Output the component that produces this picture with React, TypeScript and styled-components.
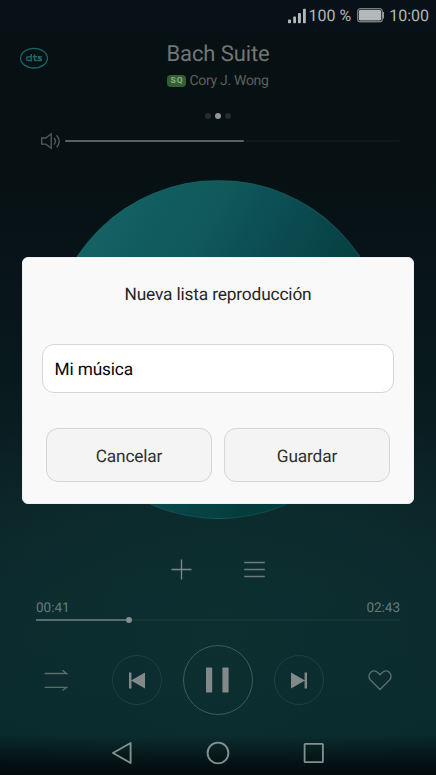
import React from "react";
import styled, { createGlobalStyle } from "styled-components";

const GlobalStyle = createGlobalStyle`
  * { box-sizing: border-box; }
  html, body { margin: 0; padding: 0; background: #071014; }
  body { font-family: Roboto, "Noto Sans", sans-serif; overflow: hidden; text-rendering: geometricPrecision; }
  svg { display: block; flex: none; }
  button, input { font-family: inherit; text-rendering: inherit; }
`;

const Screen = styled.div`
  position: relative;
  width: 436px;
  height: 775px;
  display: flex;
  flex-direction: column;
  overflow: hidden;
  background:
    linear-gradient(to bottom, transparent 735px, #020c0e 772px),
    radial-gradient(ellipse 310px 270px at 50% 635px, #0d2f30 0%, rgba(13, 47, 48, 0.55) 55%, transparent 100%),
    linear-gradient(to bottom, #071117 0, #071117 32px, #071012 34px, #071012 140px, #071214 200px, #08131a 260px, #08191d 370px, #0b2327 500px, #0c292d 600px, #0a292d 690px, #08282c 735px, #061b1e 775px);
`;

const StatusBar = styled.header`
  height: 30px;
  padding: 1px 7px 0 0;
  display: flex;
  align-items: center;
  justify-content: flex-end;
  font-size: 16px;
  color: #b3b8ba;
`;

const StatusText = styled.span<{ $gap: number }>`
  margin-left: ${(p) => p.$gap}px;
  line-height: 30px;
  white-space: pre;
`;

const TrackHeader = styled.section`
  height: 80px;
  padding: 0 20px;
  display: grid;
  grid-template-columns: 28px 1fr 28px;
`;

const DtsBadge = styled.div`
  padding-top: 17px;
`;

const TrackInfo = styled.div`
  display: flex;
  flex-direction: column;
  align-items: center;
`;

const TrackTitle = styled.h1`
  margin: 10px 0 0;
  font-size: 22px;
  line-height: 30px;
  letter-spacing: -0.1px;
  font-weight: 400;
  color: #727677;
`;

const Artist = styled.div`
  display: flex;
  align-items: center;
  gap: 3px;
  height: 21px;
  font-size: 14px;
  letter-spacing: -0.3px;
  color: #5b6162;
`;

const Quality = styled.span`
  width: 19px;
  height: 12px;
  border-radius: 4px;
  background: #32602f;
  color: #93a792;
  font-size: 8.5px;
  font-weight: 700;
  letter-spacing: 1.2px;
  line-height: 12.5px;
  padding-left: 3px;
`;

const Pager = styled.div`
  height: 12px;
  display: flex;
  align-items: center;
  justify-content: center;
  gap: 4px;
`;

const Dot = styled.i<{ $active?: boolean }>`
  width: 6px;
  height: 6px;
  border-radius: 50%;
  background: ${(p) => (p.$active ? "#919596" : "#252c2d")};
`;

const VolumeRow = styled.div`
  height: 38px;
  padding: 0 36px 0 40px;
  display: flex;
  align-items: center;
  gap: 3px;
`;

const Track = styled.div`
  flex: 1;
  height: 2px;
  border-radius: 1px;
  background: #0d1819;
`;

const VolumeLevel = styled.div`
  width: 179px;
  height: 2px;
  border-radius: 1px;
  background: #5b6061;
`;

const Disc = styled.div`
  flex: none;
  width: 339px;
  height: 339px;
  margin: 20px auto 0;
  border-radius: 50%;
  border: 1px solid rgba(40, 105, 105, 0.35);
  background: linear-gradient(119deg, #17666a 5%, #125d60 22%, #10585a 35%, #0c4f55 45%, #09474b 56%, #043c3d 72%, #023e40 90%);
`;

const Actions = styled.div`
  height: 26px;
  margin-top: 37px;
  display: flex;
  align-items: center;
  justify-content: center;
  gap: 52px;
`;

const Progress = styled.section`
  height: 48px;
  margin-top: 13px;
  padding: 5px 36px 0;
`;

const Times = styled.div`
  display: flex;
  justify-content: space-between;
  height: 16px;
  font-size: 13.5px;
  line-height: 17px;
  color: #667a7b;
`;

const SeekBar = styled.div`
  height: 7px;
  display: flex;
  align-items: center;
`;

const Elapsed = styled.div`
  width: 90px;
  height: 2px;
  background: #596d6e;
`;

const Thumb = styled.i`
  width: 6px;
  height: 6px;
  border-radius: 50%;
  background: #858f8f;
`;

const Remaining = styled.div`
  flex: 1;
  height: 2px;
  background: #143436;
`;

const Controls = styled.section`
  height: 70px;
  display: flex;
  align-items: center;
  justify-content: center;
  margin-top: 2px;
`;

const RoundButton = styled.button<{ $size: number; $line: string; $shift?: number }>`
  width: ${(p) => p.$size}px;
  height: ${(p) => p.$size}px;
  flex: none;
  padding: 0 ${(p) => p.$shift ?? 0}px 0 0;
  border: 1px solid ${(p) => p.$line};
  border-radius: 50%;
  background: none;
  display: flex;
  align-items: center;
  justify-content: center;
`;

const Spacer = styled.span<{ $w: number }>`
  width: ${(p) => p.$w}px;
  flex: none;
`;

const NavBar = styled.nav`
  height: 44px;
  margin-top: 16px;
  display: flex;
  align-items: center;
  justify-content: center;
  gap: 73px;
`;

const Dialog = styled.div`
  position: absolute;
  left: 22px;
  top: 257px;
  width: 392px;
  height: 247px;
  padding: 24px 20px 0;
  border-radius: 6px;
  background: #f9f9f9;
  border: 1px solid #eef0f0;
`;

const DialogTitle = styled.h2`
  margin: 0;
  height: 25px;
  line-height: 26px;
  text-align: center;
  font-size: 17.3px;
  letter-spacing: -0.15px;
  font-weight: 400;
  color: #262626;
`;

const NameInput = styled.input`
  display: block;
  width: 352px;
  height: 49px;
  margin: 37px 0 0 -1px;
  padding: 2px 11.5px 0;
  border: 1px solid #d6d6d6;
  border-radius: 12px;
  background: #fff;
  font-size: 17.3px;
  letter-spacing: -0.15px;
  color: #080808;
  outline: none;
`;

const DialogButtons = styled.div`
  display: flex;
  gap: 12px;
  margin: 35px 0 0 3px;
`;

const DialogButton = styled.button`
  width: 166px;
  height: 54px;
  padding: 3px 0 0;
  border: 1px solid #d5d5d5;
  border-radius: 12px;
  background: #f4f4f4;
  font-size: 17.3px;
  letter-spacing: -0.15px;
  color: #303030;
`;

const SignalIcon = () => (
  <svg width="18" height="16" viewBox="0 0 18 16" fill="#b3b8ba">
    <rect x="0" y="11.5" width="3" height="3.7" rx=".8" />
    <rect x="5.2" y="8.5" width="2.8" height="6.7" rx=".8" />
    <rect x="10" y="5" width="2.9" height="10.2" rx=".8" />
    <rect x="15" y="0.7" width="2.8" height="14.5" rx=".8" />
  </svg>
);

const BatteryIcon = () => (
  <svg width="28" height="15" viewBox="0 0 28 15">
    <rect x="0.8" y="0.8" width="24.4" height="13" rx="1.8" fill="none" stroke="#a7adae" strokeWidth="1" />
    <rect x="2" y="2" width="22" height="10.6" rx="1" fill="#b3b8b8" />
    <path d="M25.6 4h1.3v6.4h-1.3z" fill="#a7adae" />
  </svg>
);

const DtsIcon = () => (
  <svg width="28" height="22" viewBox="0 0 28 22">
    <ellipse cx="14" cy="11.2" rx="13.4" ry="9.8" fill="none" stroke="#166568" strokeWidth="1.3" />
    <g fill="none" stroke="#1b6668" strokeWidth="1.5">
      <path d="M11.2 6.9v7.5M11.2 9.7H8.3q-1.6 0-1.6 1.3v1.3q0 1.3 1.6 1.3h2.9" />
      <path d="M14.6 7.4v6.2h2.2M12.7 9.7h4.5M21.8 9.7h-3.1v1.5l2.5.9v1.5h-4" />
    </g>
  </svg>
);

const SpeakerIcon = () => (
  <svg width="22" height="18" viewBox="0 0 22 18" fill="none" stroke="#565c5e" strokeWidth="1.3">
    <path d="M1.7 6h4.1l5.4-4.2v14.4l-5.4-4H1.7z" />
    <path d="M14 6q2.8 3.2 0 6.6M16.6 3.2q5.2 6 0 12.2" />
  </svg>
);

const PlusIcon = () => (
  <svg width="21" height="21" viewBox="0 0 21 21" stroke="#7d898a" strokeWidth="1.3">
    <path d="M.5 10.5h20M10.5.5v20" />
  </svg>
);

const ListIcon = () => (
  <svg width="21" height="21" viewBox="0 0 21 21" stroke="#6c7c7d" strokeWidth="1.4">
    <path d="M.2 3.5h20.6M.2 10.5h20.6M.2 17.5h20.6" />
  </svg>
);

const RepeatIcon = () => (
  <svg width="24" height="24" viewBox="0 0 24 24" fill="none" stroke="#596d6f" strokeWidth="1.3">
    <path d="M.6 5.5h22l-4.2-3.2M.6 19.4h22l-4.2 3.2" />
  </svg>
);

const SkipIcon = ({ back }: { back?: boolean }) => (
  <svg width="16" height="17" viewBox="0 0 16 17" fill="#838989">
    {back ? (
      <path d="M0 .4h2.4v16H0zM2 8.4 16 .6v15.8z" />
    ) : (
      <path d="M16 .4h-2.4v16H16zM14 8.4 0 .6v15.8z" />
    )}
  </svg>
);

const PauseIcon = () => (
  <svg width="23" height="26" viewBox="0 0 23 26" fill="#838989">
    <rect x="0" y=".6" width="6.2" height="24.8" rx=".6" />
    <rect x="16.4" y=".6" width="6.2" height="24.8" rx=".6" />
  </svg>
);

const HeartIcon = () => (
  <svg width="24" height="21" viewBox="0 0 24 21" fill="none" stroke="#5a6e6f" strokeWidth="1.4" strokeLinejoin="round">
    <path d="M12 19.5 2.5 10C.4 7.6.5 4.2 2.8 2.2 5 .5 8 .8 10 2.7L12 4.7l2-2c2-1.9 5-2.2 7.2-.5 2.3 2 2.4 5.4.3 7.8z" />
  </svg>
);

const BackIcon = () => (
  <svg width="22" height="24" viewBox="0 0 22 24" fill="none" stroke="#84908f" strokeWidth="1.9" strokeLinejoin="round">
    <path d="M2 12 19.6 2v20z" />
  </svg>
);

const HomeIcon = () => (
  <svg width="24" height="24" viewBox="0 0 24 24" fill="none" stroke="#84908f" strokeWidth="1.9">
    <circle cx="12" cy="12" r="10.4" />
  </svg>
);

const RecentsIcon = () => (
  <svg width="22" height="22" viewBox="0 0 22 22" fill="none" stroke="#84908f" strokeWidth="1.8">
    <rect x="1.6" y="1.9" width="18.3" height="18.3" rx=".6" />
  </svg>
);

export default function App() {
  return (
    <>
      <GlobalStyle />
      <Screen>
        <StatusBar>
          <SignalIcon />
          <StatusText $gap={2}>100 %</StatusText>
          <Spacer $w={6} />
          <BatteryIcon />
          <StatusText $gap={4}>10:00</StatusText>
        </StatusBar>
        <TrackHeader>
          <DtsBadge>
            <DtsIcon />
          </DtsBadge>
          <TrackInfo>
            <TrackTitle>Bach Suite</TrackTitle>
            <Artist>
              <Quality>SQ</Quality>
              Cory J. Wong
            </Artist>
          </TrackInfo>
        </TrackHeader>
        <Pager>
          <Dot />
          <Dot $active />
          <Dot />
        </Pager>
        <VolumeRow>
          <SpeakerIcon />
          <Track>
            <VolumeLevel />
          </Track>
        </VolumeRow>
        <Disc />
        <Actions>
          <PlusIcon />
          <ListIcon />
        </Actions>
        <Progress>
          <Times>
            <span>00:41</span>
            <span>02:43</span>
          </Times>
          <SeekBar>
            <Elapsed />
            <Thumb />
            <Remaining />
          </SeekBar>
        </Progress>
        <Controls>
          <RepeatIcon />
          <Spacer $w={44} />
          <RoundButton $size={50} $line="#1f4042" $shift={1} aria-label="Anterior">
            <SkipIcon back />
          </RoundButton>
          <Spacer $w={21} />
          <RoundButton $size={70} $line="#415a5c" $shift={1} aria-label="Pausa">
            <PauseIcon />
          </RoundButton>
          <Spacer $w={21} />
          <RoundButton $size={50} $line="#1f4042" aria-label="Siguiente">
            <SkipIcon />
          </RoundButton>
          <Spacer $w={44} />
          <HeartIcon />
        </Controls>
        <NavBar>
          <BackIcon />
          <HomeIcon />
          <RecentsIcon />
        </NavBar>
        <Dialog role="dialog">
          <DialogTitle>Nueva lista reproducción</DialogTitle>
          <NameInput defaultValue="Mi música" />
          <DialogButtons>
            <DialogButton>Cancelar</DialogButton>
            <DialogButton>Guardar</DialogButton>
          </DialogButtons>
        </Dialog>
      </Screen>
    </>
  );
}
